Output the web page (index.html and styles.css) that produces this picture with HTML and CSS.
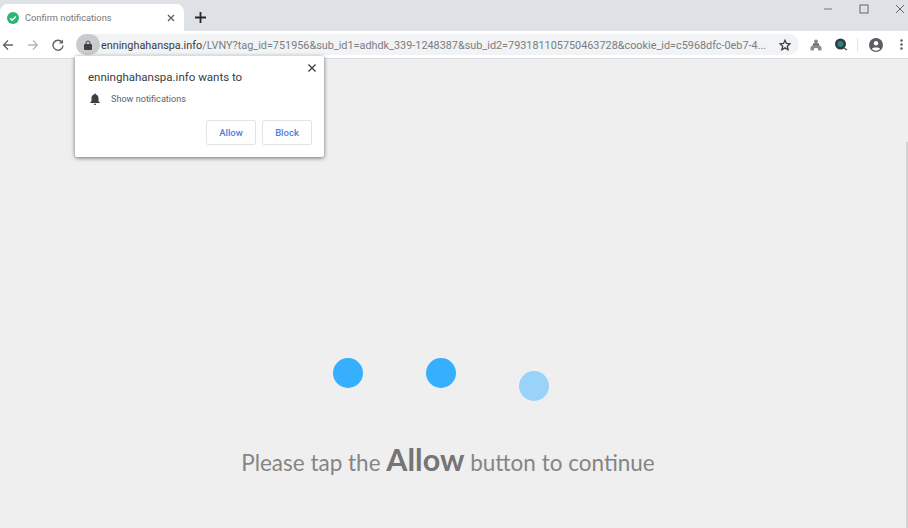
FILE: index.html
```html
<!DOCTYPE html>
<html lang="en">
<head>
    <meta charset="UTF-8">
    <title>Confirm notifications</title>
    <link rel="stylesheet" href="styles.css">
</head>
<body>
    <!-- tab strip -->
    <div class="tabstrip">
        <div class="tab">
            <svg class="tab-favicon" width="12" height="12" viewBox="0 0 12 12"><circle cx="6" cy="6" r="6" fill="#2bb673"/><path d="M3.200 6.200l2 2 3.600-3.800" fill="none" stroke="#fff" stroke-width="1.400"/></svg>
            <span class="tab-title">Confirm notifications</span>
            <svg class="tab-close" width="8" height="8" viewBox="0 0 8 8"><path d="M1 1l6 6M7 1l-6 6" stroke="#5f6368" stroke-width="1.400"/></svg>
        </div>
        <svg class="new-tab" width="11" height="11" viewBox="0 0 11 11"><path d="M5.500 0v11M0 5.500h11" stroke="#27292c" stroke-width="1.800"/></svg>
        <div class="window-controls">
            <svg width="10" height="10" viewBox="0 0 10 10"><path d="M1 5h8" stroke="#777" stroke-width="1"/></svg>
            <svg width="10" height="10" viewBox="0 0 10 10"><rect x="1" y="1" width="8" height="8" fill="none" stroke="#666" stroke-width="1"/></svg>
            <svg width="10" height="10" viewBox="0 0 10 10"><path d="M1 1l8 8M9 1l-8 8" stroke="#666" stroke-width="1"/></svg>
        </div>
    </div>

    <!-- toolbar -->
    <div class="toolbar">
        <svg class="nav-icon" width="12" height="12" viewBox="0 0 12 12"><path d="M11 6H2M6 1.500L1.500 6 6 10.500" fill="none" stroke="#5f6368" stroke-width="1.300"/></svg>
        <svg class="nav-icon" width="12" height="12" viewBox="0 0 12 12"><path d="M1 6h9M6 1.500L10.500 6 6 10.500" fill="none" stroke="#b4b6b9" stroke-width="1.300"/></svg>
        <svg class="nav-icon" width="12" height="12" viewBox="0 0 12 12"><path d="M10 3.200A5 5 0 1 0 11 6.500" fill="none" stroke="#5f6368" stroke-width="1.400"/><path d="M11 0.500v4H7z" fill="#5f6368"/></svg>
        <div class="omnibox">
            <span class="lock-chip">
                <svg width="8" height="10" viewBox="0 0 8 10"><path d="M2 4.500V3a2 2 0 0 1 4 0v1.500" fill="none" stroke="#3c4043" stroke-width="1"/><rect y="4" width="8" height="6" rx="1" fill="#3c4043"/></svg>
            </span>
            <span class="url"><span class="url-host">enninghahanspa.info</span>/LVNY?tag_id=751956&amp;sub_id1=adhdk_339-1248387&amp;sub_id2=793181105750463728&amp;cookie_id=c5968dfc-0eb7-4...</span>
            <svg class="star" width="12" height="12" viewBox="0 0 24 24"><path d="M12 2.500l2.900 6.500 7.100.7-5.400 4.700 1.600 7-6.200-3.700-6.200 3.700 1.600-7L2 9.700 9.100 9z" fill="none" stroke="#3c4043" stroke-width="2.600"/></svg>
        </div>
        <div class="toolbar-right">
            <svg width="12" height="12" viewBox="0 0 12 12"><circle cx="6" cy="2.500" r="2" fill="#85898c"/><path d="M4 4.500h4l3.500 4v3h-3l-1-2.500h-3l-1 2.500h-3v-3z" fill="#85898c"/><rect x="3" y="4.500" width="6" height="1.200" fill="#55585b"/></svg>
            <svg class="ext-search" width="14" height="14" viewBox="0 0 14 14"><circle cx="6.500" cy="6" r="5.500" fill="#2f3b40"/><circle cx="6.500" cy="6" r="3" fill="#2f7f7a"/><path d="M10 10l3 2" stroke="#555" stroke-width="1.500"/></svg>
            <span class="toolbar-sep"></span>
            <svg class="avatar" width="14" height="14" viewBox="0 0 14 14"><circle cx="7" cy="7" r="7" fill="#5a5e62"/><circle cx="7" cy="5.200" r="2.200" fill="#fff"/><path d="M2.800 10.800c1-1.800 7.400-1.800 8.400 0A5.500 5.500 0 0 1 2.800 10.800z" fill="#fff"/></svg>
            <svg class="menu-dots" width="3" height="11" viewBox="0 0 3 11"><circle cx="1.500" cy="1.500" r="1.300" fill="#5f6368"/><circle cx="1.500" cy="5.500" r="1.300" fill="#5f6368"/><circle cx="1.500" cy="9.500" r="1.300" fill="#5f6368"/></svg>
        </div>
    </div>

    <!-- page -->
    <div class="page">
        <div class="scrollbar-thumb"></div>
        <div class="dots">
            <span class="dot"></span>
            <span class="dot"></span>
            <span class="dot dot-fading"></span>
        </div>
        <p class="tap-text">Please tap the <b>Allow</b> button to continue</p>
    </div>

    <!-- notification prompt -->
    <div class="prompt">
        <svg class="prompt-close" width="8" height="8" viewBox="0 0 8 8"><path d="M0.500 0.500l7 7M7.500 0.500l-7 7" stroke="#3c4043" stroke-width="1.400"/></svg>
        <div class="prompt-title">enninghahanspa.info wants to</div>
        <div class="prompt-row">
            <svg width="10" height="12" viewBox="0 0 10 12"><path d="M5 0.500c.6 0 .9.400.9.900C7.600 1.800 8.500 3.200 8.500 5v3l1.300 1.500v.5H.2v-.5L1.500 8V5c0-1.800.9-3.200 2.600-3.600 0-.5.300-.9.900-.9z" fill="#3c4043"/><path d="M3.800 10.700h2.400A1.200 1.200 0 0 1 3.800 10.700z" fill="#3c4043"/></svg>
            <span>Show notifications</span>
        </div>
        <div class="prompt-buttons">
            <button type="button">Allow</button>
            <button type="button">Block</button>
        </div>
    </div>
</body>
</html>
```

FILE: styles.css
```css
* {
    box-sizing: border-box;
}
html, body {
    height: 100%;
}
body {
    margin: 0;
    overflow: hidden;
    display: flex;
    flex-direction: column;
    background-color: #efefef;
    font-family: "Roboto", "Liberation Sans", sans-serif;
}
.tabstrip {
    flex: 0 0 31px;
    display: flex;
    align-items: flex-end;
    background-color: #dee1e6;
}
.tab {
    width: 184px;
    height: 27px;
    display: flex;
    align-items: center;
    padding: 0 5px 0 7px;
    background-color: #fff;
    border-radius: 8px 8px 0 0;
}
.tab-favicon {
    flex: none;
    margin-right: 6px;
}
.tab-title {
    flex: 1;
    font-size: 9.300px;
    color: #74787c;
}
.tab-close {
    flex: none;
    margin-right: 4px;
}
.new-tab {
    flex: none;
    margin: 0 0 8px 11px;
}
.window-controls {
    margin-left: auto;
    align-self: flex-start;
    display: flex;
    gap: 26px;
    padding: 4px 3px 0 0;
}
.toolbar {
    flex: 0 0 28px;
    display: flex;
    align-items: center;
    padding: 0 6px 0 2px;
    background-color: #fff;
    border-bottom: 1px solid #d7d9dc;
}
.nav-icon {
    flex: none;
    margin-right: 13px;
}
.nav-icon:nth-child(3) {
    margin-right: 12px;
}
.omnibox {
    width: 723px;
    height: 21px;
    flex: none;
    display: flex;
    align-items: center;
    border-radius: 11px;
    background-color: #f1f3f4;
}
.lock-chip {
    flex: none;
    width: 24px;
    height: 21px;
    display: flex;
    align-items: center;
    justify-content: center;
    border-radius: 11px;
    background-color: #c9cbcd;
}
.url {
    flex: 1;
    margin-left: 1px;
    padding-top: 1px;
    font-size: 10.850px;
    color: #7a7e83;
    white-space: nowrap;
    overflow: hidden;
}
.url-host {
    color: #3a3c3f;
}
.star {
    flex: none;
    margin: 0 8px 0 10px;
}
.toolbar-right {
    flex: 1;
    display: flex;
    align-items: center;
    padding-left: 11px;
}
.ext-search {
    margin-left: 12px;
}
.toolbar-sep {
    width: 1px;
    height: 14px;
    margin-left: 9px;
    background-color: #e3e5e7;
}
.avatar {
    margin-left: 11px;
}
.menu-dots {
    margin-left: 17px;
}
.page {
    flex: 1;
    position: relative;
    display: flex;
    flex-direction: column;
    align-items: center;
    padding-top: 299px;
}
.scrollbar-thumb {
    position: absolute;
    right: 0;
    top: 83px;
    bottom: 0;
    width: 2px;
    background-color: #d4d4d4;
}
.dots {
    display: flex;
    gap: 63px;
    height: 45px;
    margin-right: 26px;
}
.dot {
    width: 30px;
    height: 30px;
    border-radius: 50%;
    background-color: #36afff;
}
.dot-fading {
    margin-top: 13px;
    background-color: #9ad3fa;
}
.tap-text {
    margin: 38px 12px 0 0;
    font-family: "Lato", "Liberation Sans", sans-serif;
    font-size: 22.500px;
    line-height: 36px;
    color: #858585;
    white-space: nowrap;
}
.tap-text b {
    font-size: 30.500px;
    font-weight: 700;
    color: #757575;
}
.prompt {
    position: absolute;
    left: 75px;
    top: 56px;
    width: 249px;
    height: 101px;
    padding: 14px 12px 0 13px;
    background-color: #fff;
    border-radius: 2px;
    box-shadow: 0 1px 4px rgba(0, 0, 0, 0.55);
}
.prompt-close {
    position: absolute;
    right: 8px;
    top: 8px;
}
.prompt-title {
    font-size: 11.500px;
    line-height: 15px;
    color: #3a3d40;
}
.prompt-row {
    display: flex;
    align-items: center;
    margin-top: 7px;
    font-size: 9.100px;
    line-height: 14px;
    color: #5f6368;
}
.prompt-row svg {
    margin: 0 11px 0 2px;
}
.prompt-buttons {
    display: flex;
    justify-content: flex-end;
    gap: 6px;
    margin-top: 14px;
}
.prompt-buttons button {
    width: 50px;
    height: 25px;
    padding: 0;
    background-color: #fff;
    border: 1px solid #e2e4e7;
    border-radius: 2px;
    font-family: inherit;
    font-size: 9.500px;
    font-weight: 500;
    color: #4a7fdc;
}
```
